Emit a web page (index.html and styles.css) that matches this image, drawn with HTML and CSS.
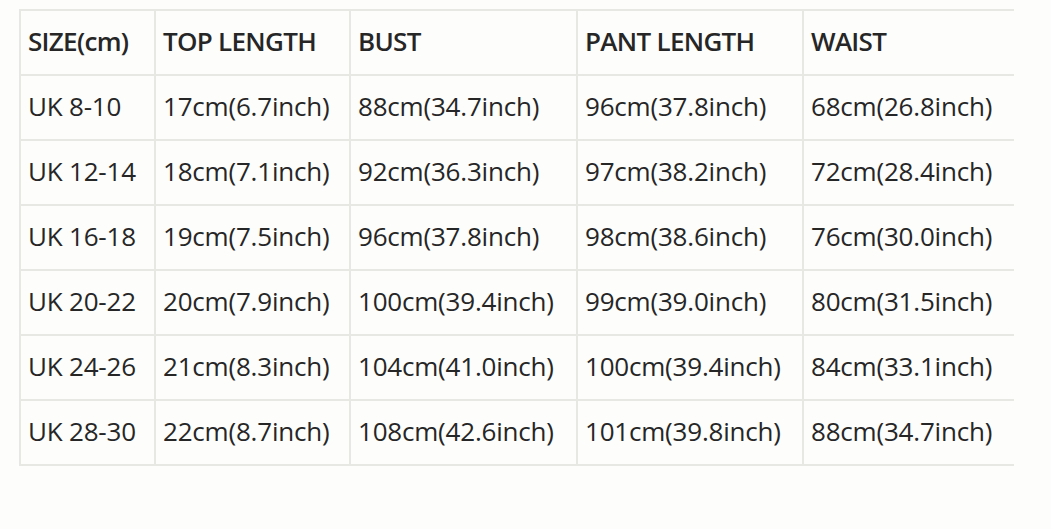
FILE: index.html
```html
<!DOCTYPE html>
<html>
<head>
<meta charset="utf-8">
<link rel="stylesheet" href="styles.css">
</head>
<body>
<div class="page">
<table class="size-table">
  <colgroup>
    <col class="c1"><col class="c2"><col class="c3"><col class="c4"><col class="c5">
  </colgroup>
  <thead>
    <tr><th>SIZE(cm)</th><th>TOP LENGTH</th><th>BUST</th><th>PANT LENGTH</th><th>WAIST</th></tr>
  </thead>
  <tbody>
    <tr><td>UK 8-10</td><td>17cm(6.7inch)</td><td>88cm(34.7inch)</td><td>96cm(37.8inch)</td><td>68cm(26.8inch)</td></tr>
    <tr><td>UK 12-14</td><td>18cm(7.1inch)</td><td>92cm(36.3inch)</td><td>97cm(38.2inch)</td><td>72cm(28.4inch)</td></tr>
    <tr><td>UK 16-18</td><td>19cm(7.5inch)</td><td>96cm(37.8inch)</td><td>98cm(38.6inch)</td><td>76cm(30.0inch)</td></tr>
    <tr><td>UK 20-22</td><td>20cm(7.9inch)</td><td>100cm(39.4inch)</td><td>99cm(39.0inch)</td><td>80cm(31.5inch)</td></tr>
    <tr><td>UK 24-26</td><td>21cm(8.3inch)</td><td>104cm(41.0inch)</td><td>100cm(39.4inch)</td><td>84cm(33.1inch)</td></tr>
    <tr><td>UK 28-30</td><td>22cm(8.7inch)</td><td>108cm(42.6inch)</td><td>101cm(39.8inch)</td><td>88cm(34.7inch)</td></tr>
  </tbody>
</table>
</div>
</body>
</html>
```

FILE: styles.css
```css
html, body {
  margin: 0;
  padding: 0;
  background: #fdfdfc;
}
.page {
  padding: 9px 0 0 19px;
}
.size-table {
  border-collapse: collapse;
  table-layout: fixed;
  width: 994px;
  font-family: "Open Sans", "DejaVu Sans", sans-serif;
  color: #262626;
}
.c1 { width: 135px; }
.c2 { width: 195px; }
.c3 { width: 227px; }
.c4 { width: 226px; }
.c5 { width: 211px; }
.size-table th,
.size-table td {
  border: 2px solid #e7e7e4;
  height: 59px;
  padding: 0 0 4px 7px;
  text-align: left;
  white-space: nowrap;
  font-size: 26px;
  line-height: 1;
}
.size-table th {
  font-weight: 600;
  letter-spacing: -0.7px;
}
.size-table td {
  font-weight: 400;
  letter-spacing: -0.2px;
}
.size-table th:last-child,
.size-table td:last-child {
  border-right: none;
}
```
